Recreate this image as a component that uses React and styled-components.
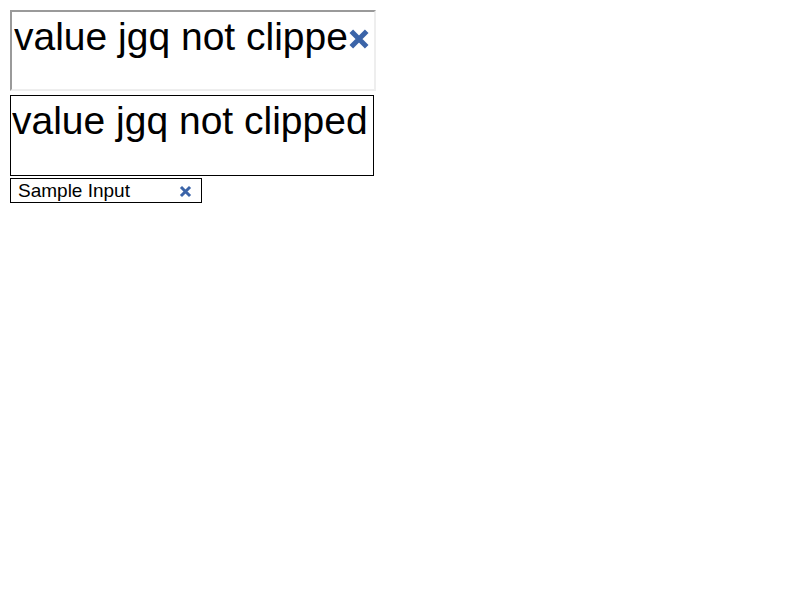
import React from 'react'
import styled, { createGlobalStyle } from 'styled-components'

const GlobalStyle = createGlobalStyle`
  body {
    margin: 8px;
    background: #fff;
    font-family: 'Liberation Sans', Arial, sans-serif;
  }
`

const Stack = styled.div`
  display: flex;
  flex-direction: column;
  align-items: flex-start;
  padding: 2px;
`

const Field = styled.div`
  box-sizing: border-box;
  display: flex;
  align-items: flex-start;
  width: ${(p) => p.$w}px;
  height: ${(p) => p.$h}px;
  margin-bottom: ${(p) => p.$gap || 0}px;
  padding: ${(p) => p.$pad || '0 2px'};
  border: ${(p) => (p.$inset ? '2px solid' : '1px solid #000')};
  border-color: ${(p) => (p.$inset ? '#9a9a9a #eeeeee #eeeeee #9a9a9a' : '#000')};
  overflow: hidden;
  color: #000;
`

const Value = styled.span`
  flex: 1;
  min-width: 0;
  white-space: nowrap;
  overflow: hidden;
  font-size: ${(p) => p.$size}px;
  line-height: ${(p) => p.$lh}px;
`

const Cancel = styled.span`
  flex: none;
  display: flex;
  align-items: center;
  justify-content: center;
  width: ${(p) => p.$box}px;
  height: ${(p) => p.$lh}px;
`

const CancelIcon = ({ size }) => (
  <svg width={size} height={size} viewBox="0 0 10 10">
    <path
      d="M1.5 1.5 L8.5 8.5 M8.5 1.5 L1.5 8.5"
      stroke="#3b64a8"
      strokeWidth="2.3"
      strokeLinecap="butt"
    />
  </svg>
)

export default function App() {
  return (
    <>
      <GlobalStyle />
      <Stack>
        <Field $inset $w={366} $h={81} $gap={4} $pad="0 3px 0 2px">
          <Value $size={39} $lh={50}>value jgq not clipped</Value>
          <Cancel $box={24} $lh={54}>
            <CancelIcon size={22} />
          </Cancel>
        </Field>
        <Field $w={364} $h={81} $gap={2} $pad="0 1px">
          <Value $size={39} $lh={50}>value jgq not clipped</Value>
        </Field>
        <Field $w={192} $h={25} $pad="0 9px 0 7px">
          <Value $size={19} $lh={23}>Sample Input</Value>
          <Cancel $box={14} $lh={25}>
            <CancelIcon size={13} />
          </Cancel>
        </Field>
      </Stack>
    </>
  )
}
